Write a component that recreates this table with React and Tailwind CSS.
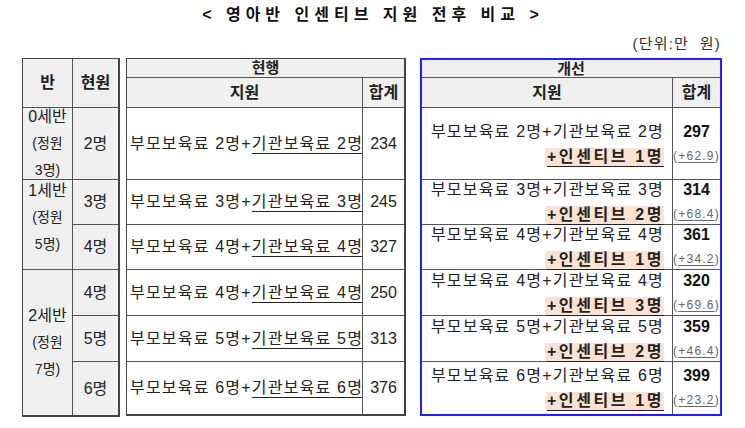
import React from "react";

const FONT = "font-['Liberation_Sans','Noto_Sans_CJK_KR',sans-serif]";

const cur = [
  { n: 2, sum: 234 },
  { n: 3, sum: 245 },
  { n: 4, sum: 327 },
  { n: 4, sum: 250 },
  { n: 5, sum: 313 },
  { n: 6, sum: 376 },
];

const imp = [
  { n: 2, inc: 1, sum: 297, d: "+62.9" },
  { n: 3, inc: 2, sum: 314, d: "+68.4" },
  { n: 4, inc: 1, sum: 361, d: "+34.2" },
  { n: 4, inc: 3, sum: 320, d: "+69.6" },
  { n: 5, inc: 2, sum: 359, d: "+46.4" },
  { n: 6, inc: 1, sum: 399, d: "+23.2" },
];

function Gray({ className = "", children }) {
  return (
    <div className={`bg-[#f0f0f0] flex items-center justify-center ${className}`}>
      {children}
    </div>
  );
}

function ClassCell({ age, cap, className = "" }) {
  return (
    <Gray className={`flex-col text-[#222] ${className}`}>
      <div className="text-[16px] leading-[27px] whitespace-nowrap">{age}</div>
      <div className="text-[14px] leading-[27px] whitespace-nowrap">(정원</div>
      <div className="text-[14px] leading-[27px] whitespace-nowrap">{cap}명)</div>
    </Gray>
  );
}

export default function App() {
  return (
    <div className={`w-[745px] h-[428px] bg-white text-[#222] overflow-hidden ${FONT}`}>
      <div className="h-[30px] flex items-center justify-center">
        <span className="text-[16px] font-bold tracking-[5px] text-[#111] pl-[1px]">
          &lt; 영아반 인센티브 지원 전후 비교 &gt;
        </span>
      </div>
      <div className="h-[28px] flex items-center justify-end pr-[24px]">
        <span className="text-[15px] text-[#333] tracking-[1.2px]">(단위:만&nbsp; 원)</span>
      </div>
      <div className="flex items-start pl-[22px]">
        {/* Table 1 */}
        <div className="grid grid-cols-[49px_45px] grid-rows-[48px_71px_44px_44px_45px_45px_53px] gap-px bg-[#555] border border-[#444] border-r-2 border-b-2">
          <Gray className="text-[16px] font-bold">반</Gray>
          <Gray className="text-[16px] font-bold">현원</Gray>
          <ClassCell age="0세반" cap={3} />
          <Gray className="text-[16px]">2명</Gray>
          <ClassCell age="1세반" cap={5} className="row-span-2 pb-[15px]" />
          <Gray className="text-[16px]">3명</Gray>
          <Gray className="text-[16px]">4명</Gray>
          <ClassCell age="2세반" cap={7} className="row-span-3" />
          <Gray className="text-[16px]">4명</Gray>
          <Gray className="text-[16px]">5명</Gray>
          <Gray className="text-[16px]">6명</Gray>
        </div>

        {/* Table 2 */}
        <div className="ml-[6px] grid grid-cols-[235px_41px] grid-rows-[18px_29px_71px_44px_44px_45px_45px_52px] gap-px bg-[#555] border border-[#444] border-r-2 border-b-2">
          <Gray className="col-span-2 text-[15px] font-bold leading-[18px] overflow-hidden">현행</Gray>
          <Gray className="text-[16px] font-bold">지원</Gray>
          <Gray className="text-[16px] font-bold">합계</Gray>
          {cur.map((r, i) => (
            <React.Fragment key={i}>
              <div className="bg-white flex items-center pl-[3px] text-[16px] tracking-[1.2px] whitespace-nowrap overflow-hidden">
                <span>부모보육료 {r.n}명+</span>
                <span className="underline decoration-1 underline-offset-[4px]">기관보육료 {r.n}명</span>
              </div>
              <div className="bg-white flex items-center justify-center text-[16px]">{r.sum}</div>
            </React.Fragment>
          ))}
        </div>

        {/* Table 3 */}
        <div className="ml-[14px] grid grid-cols-[250px_47px] grid-rows-[17px_29px_71px_44px_44px_45px_45px_52px] gap-px bg-[#555] border-2 border-[#1f1fff]">
          <Gray className="col-span-2 text-[15px] font-bold leading-[17px] overflow-hidden">개선</Gray>
          <Gray className="text-[16px] font-bold">지원</Gray>
          <Gray className="text-[16px] font-bold">합계</Gray>
          {imp.map((r, i) => (
            <React.Fragment key={i}>
              <div className="bg-white flex flex-col items-end justify-center pr-[8px] whitespace-nowrap">
                <div className="text-[16px] leading-[25px] tracking-[1.2px]">
                  부모보육료 {r.n}명+기관보육료 {r.n}명
                </div>
                <div className="leading-[25px]">
                  <span className="bg-[#fbe2d2] text-[16px] font-bold tracking-[2.6px] underline decoration-1 underline-offset-[4px] pl-[2px] pb-[1px]">
                    +인센티브 {r.inc}명
                  </span>
                </div>
              </div>
              <div className="bg-white flex flex-col items-center justify-center whitespace-nowrap">
                <div className="text-[16px] font-bold leading-[25px] text-[#111]">{r.sum}</div>
                <div className="text-[12px] leading-[25px] text-[#666] tracking-[1.2px]">
                  (<span className="underline decoration-1 underline-offset-[2px]">{r.d}</span>)
                </div>
              </div>
            </React.Fragment>
          ))}
        </div>
      </div>
    </div>
  );
}
